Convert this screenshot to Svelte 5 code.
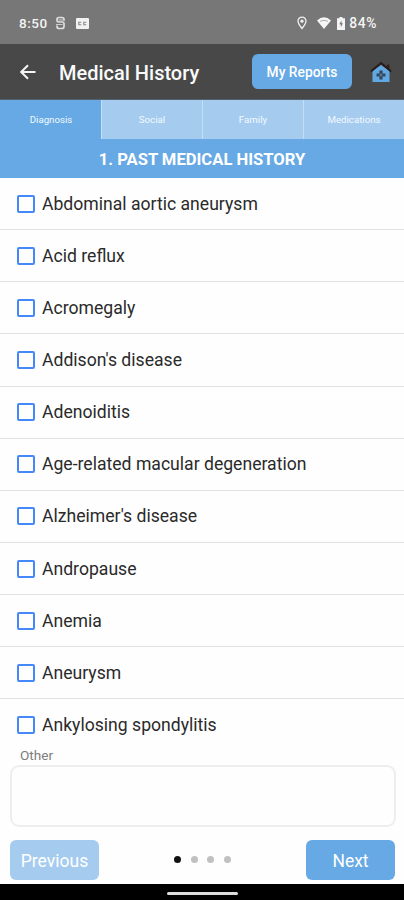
<script>
	let tabs = ['Diagnosis', 'Social', 'Family', 'Medications'];
	let activeTab = $state(0);
	let other = $state('');
	let conditions = $state(
		[
			'Abdominal aortic aneurysm',
			'Acid reflux',
			'Acromegaly',
			"Addison's disease",
			'Adenoiditis',
			'Age-related macular degeneration',
			"Alzheimer's disease",
			'Andropause',
			'Anemia',
			'Aneurysm',
			'Ankylosing spondylitis'
		].map((name) => ({ name, checked: false }))
	);
</script>

<div class="screen">
	<div class="status">
		<span class="time">8:50</span>
		<svg class="sync" width="11" height="14" viewBox="0 0 11 14">
			<path d="M9 4.500V3.500Q9 1.500 7 1.500H4Q2 1.500 2 3.500V4.500Q2 6 3.500 6H7.500Q9 6 9 7.500V10.500Q9 12.500 7 12.500H4Q2 12.500 2 10.500V9.500" fill="none" stroke="#dedede" stroke-width="1.700" />
			<path d="M3.500 4H10M1 8.500H7.500" stroke="#cfcfcf" stroke-width="1.200" />
		</svg>
		<svg class="card" width="13" height="11" viewBox="0 0 13 11">
			<rect width="13" height="11" rx="1" fill="#f2f2f2" />
			<path d="M5.300 4.200H2.800V6.800H5.300M10.300 4.200H7.800V6.800H10.300" fill="none" stroke="#888" stroke-width="1.100" />
		</svg>
		<div class="status-right">
			<svg class="pin" width="10" height="14" viewBox="0 0 10 14">
				<path d="M5 1.200C2.700 1.200 1 2.900 1 5.100c0 2.700 4 7.400 4 7.400S9 7.800 9 5.100c0-2.200-1.700-3.900-4-3.900z" fill="none" stroke="#f0f0f0" stroke-width="1.300" />
				<circle cx="5" cy="5.200" r="1.600" fill="#f0f0f0" />
			</svg>
			<svg class="wifi" width="14" height="12" viewBox="0 0 14 12">
				<path d="M0 3.500Q7-3 14 3.500L7 12z" fill="#f6f6f6" />
				<path d="M3 4.300Q7 2.200 11 4.300" fill="none" stroke="#999" stroke-width=".8" />
			</svg>
			<svg class="battery" width="8" height="13" viewBox="0 0 8 13">
				<path d="M2.500 0h3v1.300H8V13H0V1.300h2.500z" fill="#f4f4f4" />
				<path d="M4.500 3.500L2.300 7.300h1.500v3l2.100-4H4.500z" fill="#777" />
			</svg>
			<span class="percent">84%</span>
		</div>
	</div>

	<header>
		<button class="back" aria-label="Back">
			<svg width="16" height="16" viewBox="0 0 16 16">
				<path d="M15.500 8H1.500M8 1.200L1.200 8L8 14.800" fill="none" stroke="#f5f5f5" stroke-width="2" />
			</svg>
		</button>
		<h1>Medical History</h1>
		<button class="reports">My Reports</button>
		<svg class="home" width="22" height="22" viewBox="0 0 22 22">
			<path d="M17 3.500h2.500v6L17 7.500z" fill="#3a211b" />
			<path d="M2.500 10L11 4L19.500 10V21H2.500z" fill="#62a9e4" />
			<path d="M.8 10.500L11 2L21.200 10.500" fill="none" stroke="#291c19" stroke-width="2" />
			<path d="M11 9.500V18.500M6.500 14H15.500" stroke="#35485a" stroke-width="3.200" />
			<path d="M11 12.500V15.500M9.500 14H12.500" stroke="#5189b8" stroke-width="1" />
		</svg>
	</header>

	<nav>
		{#each tabs as tab, i}
			<button class:active={i === activeTab} onclick={() => (activeTab = i)}>{tab}</button>
		{/each}
	</nav>
	<h2>1. PAST MEDICAL HISTORY</h2>

	<div class="list">
		{#each conditions as condition}
			<label class="row">
				<input type="checkbox" bind:checked={condition.checked} />
				<span>{condition.name}</span>
			</label>
		{/each}
	</div>

	<label class="other" for="other">Other</label>
	<textarea id="other" bind:value={other}></textarea>

	<footer>
		<button class="previous">Previous</button>
		<div class="dots">
			{#each tabs as _, i}
				<span class:current={i === activeTab}></span>
			{/each}
		</div>
		<button>Next</button>
	</footer>
	<div class="gesture"><span></span></div>
</div>

<style>
	:global(body) {
		margin: 0;
		background: #fff;
	}
	.screen {
		display: flex;
		flex-direction: column;
		width: 404px;
		height: 900px;
		overflow: hidden;
		font-family: Roboto, sans-serif;
		color: #2a2a2a;
		background: #fefefe;
	}
	.screen * {
		box-sizing: border-box;
	}
	button {
		padding: 0;
		border: 0;
		font-family: inherit;
		color: #fff;
		background: #66a9e4;
	}
	.status {
		display: flex;
		align-items: center;
		flex: none;
		height: 44px;
		padding: 2px 27px 0 19px;
		color: #f4f4f4;
		background: #777;
	}
	.time {
		width: 36px;
		font-size: 13.5px;
		font-weight: 500;
		letter-spacing: 0.55px;
	}
	.card {
		margin-left: 10px;
	}
	.status-right {
		display: flex;
		align-items: center;
		margin-left: auto;
	}
	.wifi {
		margin: 0 6px 0 10px;
	}
	.percent {
		margin-left: 4px;
		font-size: 13.8px;
		font-weight: 500;
		letter-spacing: 0.6px;
	}
	header {
		display: flex;
		align-items: center;
		flex: none;
		height: 56px;
		padding: 0 12px 0 20px;
		background: #484848;
		border-bottom: 1px solid #526170;
	}
	.back {
		display: flex;
		background: none;
	}
	h1 {
		margin: 2px 0 0 23px;
		font-size: 20px;
		font-weight: 500;
		color: #fafafa;
		white-space: nowrap;
	}
	.reports {
		width: 100px;
		height: 35px;
		margin-left: auto;
		border-radius: 6px;
		font-size: 13.8px;
		font-weight: 500;
	}
	.home {
		margin-left: 18px;
	}
	nav {
		display: flex;
		flex: none;
		height: 39px;
		background: #66a9e4;
	}
	nav button {
		flex: 1;
		border-left: 1px solid #c4def5;
		font-size: 9.7px;
		color: #f2f9ff;
		background: #a5ccef;
	}
	nav button.active {
		border-left-color: #66a9e4;
		background: #66a9e4;
	}
	h2 {
		flex: none;
		height: 39px;
		margin: 0;
		padding-top: 1px;
		font-size: 16.6px;
		font-weight: 700;
		line-height: 39px;
		text-align: center;
		color: #fff;
		background: #66a9e4;
	}
	.list {
		flex: none;
		height: 568px;
	}
	.row {
		display: flex;
		align-items: center;
		height: 52.15px;
		padding-left: 17px;
		border-bottom: 1px solid #e2e2e2;
		font-size: 17.6px;
		white-space: nowrap;
	}
	.row:last-child {
		height: 46px;
		padding-top: 6px;
		border-bottom: 0;
	}
	input {
		appearance: none;
		width: 18px;
		height: 18px;
		margin: 0 7px 0 0;
		border: 2px solid #4488fa;
		border-radius: 2px;
	}
	input:checked {
		background: #4488fa;
	}
	.other {
		flex: none;
		height: 19px;
		padding-left: 20px;
		font-size: 13.6px;
		line-height: 18px;
		color: #7c7c7c;
	}
	textarea {
		flex: none;
		height: 62px;
		margin: 0 8px 0 10px;
		padding: 8px;
		border: 2px solid #eee;
		border-radius: 9px;
		font-family: inherit;
		font-size: 16px;
		background: #fefefe;
		resize: none;
		outline: none;
	}
	footer {
		display: flex;
		align-items: flex-end;
		justify-content: space-between;
		flex: 1;
		padding: 0 9px 4px 10px;
	}
	footer button {
		width: 89px;
		height: 40px;
		padding-top: 2px;
		border-radius: 6px;
		font-size: 17.5px;
	}
	footer .previous {
		background: #a5ccef;
	}
	.dots {
		display: flex;
		gap: 9.5px;
		margin-bottom: 17px;
	}
	.dots span {
		width: 7px;
		height: 7px;
		border-radius: 50%;
		background: #c0c0c0;
	}
	.dots .current {
		background: #111;
	}
	.gesture {
		display: flex;
		justify-content: center;
		flex: none;
		height: 16px;
		padding-top: 8px;
		background: #000;
	}
	.gesture span {
		width: 71px;
		height: 3px;
		border-radius: 2px;
		background: #ddd;
	}
</style>
